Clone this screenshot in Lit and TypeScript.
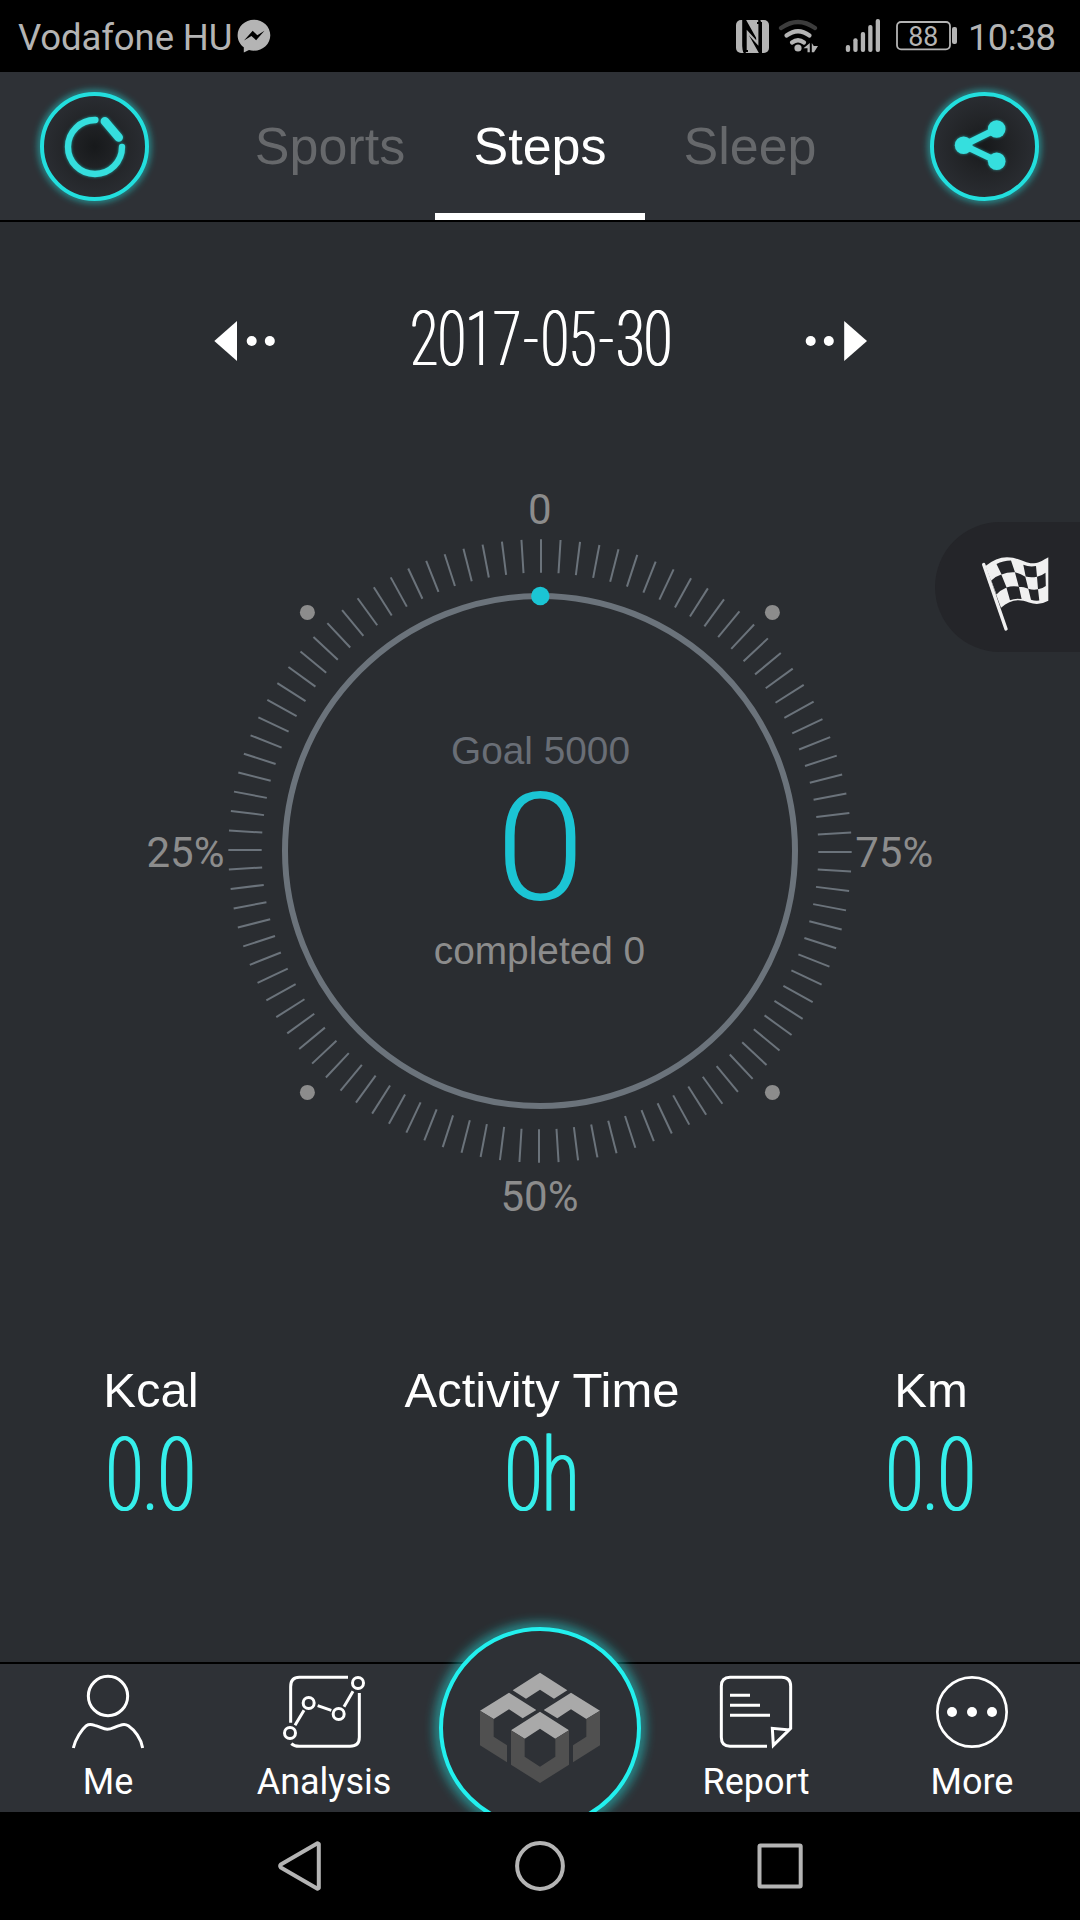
import { LitElement, html, svg, css } from "lit";
import { customElement } from "lit/decorators.js";

const tabs = [
  { label: "Sports", active: false },
  { label: "Steps", active: true },
  { label: "Sleep", active: false },
];

const stats = [
  { label: "Kcal", value: "0.0" },
  { label: "Activity Time", value: "0h" },
  { label: "Km", value: "0.0" },
];

@customElement("status-bar")
class StatusBar extends LitElement {
  static styles = css`
    :host {
      display: flex;
      align-items: center;
      justify-content: space-between;
      height: 72px;
      padding: 4px 26px 0 18px;
      box-sizing: border-box;
      background: #000;
      color: #b4b4b4;
      font-family: Roboto, "Liberation Sans", sans-serif;
      font-size: 36.5px;
      line-height: 72px;
    }
    .side { display: flex; align-items: center; height: 72px; }
    .carrier { letter-spacing: -0.1px; width: 219px; white-space: nowrap; }
    svg { display: block; }
    .sys { margin-top: -4px; }
    .clock { width: 86px; white-space: nowrap; letter-spacing: -0.7px; }
    .pct { font: 400 27px Roboto, sans-serif; fill: #b4b4b4; }
  `;
  render() {
    return html`
      <div class="side">
        <span class="carrier">Vodafone HU</span>
        <svg class="sys" width="34" height="34" viewBox="237 20 34 34">
          <path fill="#b4b4b4" d="M254 20.700c9.100 0 16.300 7 16.300 15.500S263 51.700 254 51.700c-1.800 0-3.500-.2-5-.7l-5.200 2.500v-5.200c-3.800-2.800-6.200-7.200-6.200-12.100C237.600 27.700 244.900 20.700 254 20.700z"/>
          <path fill="#000" d="M244 41.500l8.700-9.700 4.600 4.500 7.200-4.500-8.400 9.400-4.700-4.300z"/>
        </svg>
      </div>
      <div class="side">
        <svg class="sys" width="234" height="40" viewBox="734 16 234 40">
          <rect x="736" y="20" width="33" height="33" rx="5" fill="#b4b4b4"/>
          <g fill="none">
            <path d="M745 53Q743.500 50 743.500 46V21.500L760.500 50V27Q760.500 23 759 20" stroke="#000" stroke-width="2.600"/>
            <path d="M745.500 52V24L759.500 49V22" stroke="#000" stroke-width="5"/>
            <path d="M747.800 50V32.500L757.300 43V24" stroke="#b4b4b4" stroke-width="2.200"/>
          </g>
          <g fill="none" stroke-width="4.200" stroke-linecap="round">
            <path d="M781 28q17-12 34 0" stroke="#3c3c3c"/>
            <path d="M786.500 35.500q11.500-8.500 23 0" stroke="#b4b4b4"/>
            <path d="M792 42.500q6-4.500 12 0" stroke="#b4b4b4"/>
          </g>
          <circle cx="798" cy="48" r="3.600" fill="#b4b4b4"/>
          <path fill="#b4b4b4" d="M809.800 43v9.200h-2.300v-4h-4zM811.800 43l2 3h4.200l-4 6.300h-2.200z"/>
          <g fill="#b4b4b4">
            <rect x="845.800" y="45" width="4.300" height="7" rx="2"/>
            <rect x="853.300" y="38.300" width="4.300" height="13.700" rx="2"/>
            <rect x="860.800" y="32" width="4.300" height="20" rx="2"/>
            <rect x="868.200" y="25" width="4.300" height="27" rx="2"/>
            <rect x="875.700" y="19" width="4.300" height="33" rx="2"/>
            <rect x="952" y="27" width="5" height="17" rx="2"/>
          </g>
          <rect x="897" y="22" width="53" height="27.300" rx="4" fill="none" stroke="#b4b4b4" stroke-width="1.800"/>
          <text class="pct" x="923.200" y="45.500" text-anchor="middle" textLength="30" lengthAdjust="spacingAndGlyphs">88</text>
        </svg>
        <span class="clock">10:38</span>
      </div>
    `;
  }
}

@customElement("app-header")
class AppHeader extends LitElement {
  static styles = css`
    :host {
      display: flex;
      align-items: stretch;
      height: 150px;
      box-sizing: border-box;
      padding: 0 14px;
      border-bottom: 2px solid #000;
      background: #2e3136;
      font-family: "Liberation Sans", Arial, sans-serif;
    }
    svg { display: block; align-self: center; flex: none; }
    .tabs { display: flex; flex: none; margin: 0 49px 0 50px; }
    .tab {
      width: 210px;
      box-sizing: border-box;
      border-bottom: 7px solid transparent;
      text-align: center;
      font-size: 52px;
      line-height: 148px;
      height: 148px;
      color: #66686b;
      white-space: nowrap;
    }
    .on { color: #fff; border-bottom-color: #fff; }
  `;
  ring() {
    return svg`
      <defs>
        <radialGradient id="g"><stop offset="0" stop-color="#17191b"/><stop offset=".5" stop-color="#222427"/><stop offset="1" stop-color="#2a2d32"/></radialGradient>
        <filter id="b" x="-30%" y="-30%" width="160%" height="160%"><feGaussianBlur stdDeviation="3.500"/></filter>
        <filter id="s" x="-30%" y="-30%" width="160%" height="160%"><feGaussianBlur stdDeviation="1.500"/></filter>
      </defs>
      <circle cx="80.500" cy="80.500" r="53" fill="none" stroke="#22dfde" stroke-width="6" opacity=".65" filter="url(#b)"/>
      <circle cx="80.500" cy="80.500" r="52.500" fill="url(#g)" stroke="#22dfde" stroke-width="4"/>`;
  }
  render() {
    const sync = svg`<path d="M81.400 54A27 27 0 1 0 108 80.800" stroke-width="6.300"/><path d="M90.900 55.300L104.700 71.500" stroke-width="8.600"/>`;
    const share = svg`<path d="M92.600 63L59.600 79.300 92.600 95" stroke-width="6.500"/><g stroke="none" fill="#35dfde"><circle cx="59.600" cy="79.200" r="8.800"/><circle cx="92.700" cy="63" r="8.800"/><circle cx="92.700" cy="95.200" r="8.800"/></g>`;
    return html`
      <svg width="161" height="161" viewBox="0 0 161 161">
        ${this.ring()}
        <g fill="none" stroke="#22dfde" stroke-linecap="round" opacity=".6" filter="url(#s)">${sync}</g>
        <g fill="none" stroke="#35dfde" stroke-linecap="round">${sync}</g>
      </svg>
      <div class="tabs">
        ${tabs.map((t) => html`<div class="tab ${t.active ? "on" : ""}">${t.label}</div>`)}
      </div>
      <svg width="161" height="161" viewBox="0 0 161 161">
        ${this.ring()}
        <g fill="none" stroke="#22dfde" stroke-linecap="round" opacity=".6" filter="url(#s)">${share}</g>
        <g fill="none" stroke="#35dfde" stroke-linecap="round">${share}</g>
      </svg>
    `;
  }
}

@customElement("date-switcher")
class DateSwitcher extends LitElement {
  static styles = css`
    :host {
      display: flex;
      justify-content: space-between;
      align-items: center;
      padding: 0 211px 0 212px;
      height: 100px;
    }
    svg { display: block; overflow: visible; }
    .date {
      display: flex;
      justify-content: center;
      width: 270px;
      margin-top: -4px;
      font: 200 76px/90px Roboto, "Liberation Sans", sans-serif;
      color: #fff;
      white-space: nowrap;
      text-shadow: 1.2px 0 #fff, -1.2px 0 #fff;
      transform: scaleX(0.662);
    }
    .dash { margin: 0 4px; }
  `;
  render() {
    const [year, month, day] = ["2017", "05", "30"];
    return html`
      <svg width="60" height="44" viewBox="212 319 60 44" fill="#fff">
        <path d="M214.300 341L237 321v40z"/><circle cx="251.700" cy="341" r="5"/><circle cx="269.800" cy="341" r="5"/>
      </svg>
      <div class="date"><span>${year}</span><span class="dash">-</span><span>${month}</span><span class="dash">-</span><span>${day}</span></div>
      <svg width="60" height="44" viewBox="809 319 60 44" fill="#fff">
        <path d="M867 341L844.200 321v40z"/><circle cx="810.700" cy="341" r="5"/><circle cx="828.800" cy="341" r="5"/>
      </svg>
    `;
  }
}

@customElement("step-gauge")
class StepGauge extends LitElement {
  static styles = css`
    :host { display: block; width: 1080px; height: 760px; }
    svg { display: block; }
    .scale { font: 400 42px Roboto, sans-serif; fill: #8c8c8c; }
    .note { font: 400 38.8px "Liberation Sans", Arial, sans-serif; text-anchor: middle; }
    .goal { fill: #696e76; }
    .done { fill: #8c8c8c; }
    .count { font: 300 150px Roboto, sans-serif; fill: #1bc5d4; text-anchor: middle; }
  `;
  render() {
    const ticks = Array.from({ length: 100 }, (_, i) => i * 3.6);
    return html`
      <svg width="1080" height="760" viewBox="0 472 1080 760">
        <g stroke="#6b737b" stroke-width="2">
          ${ticks.map((a) => svg`<line x1="541" x2="541" y1="539.300" y2="572.700" transform="rotate(${a} 540 851)"/>`)}
        </g>
        <circle cx="540" cy="851" r="255" fill="none" stroke="#6b737b" stroke-width="6"/>
        <circle cx="540.300" cy="596" r="9.200" fill="#1bc5d4"/>
        <g fill="#8c8c8c">
          <circle cx="307.400" cy="612.400" r="7.500"/><circle cx="772.400" cy="612.400" r="7.500"/>
          <circle cx="307.400" cy="1092.400" r="7.500"/><circle cx="772.400" cy="1092.400" r="7.500"/>
        </g>
        <text class="scale" x="539.800" y="524" text-anchor="middle">0</text>
        <text class="scale" x="146.500" y="867" textLength="78">25%</text>
        <text class="scale" x="855.200" y="867" textLength="78">75%</text>
        <text class="scale" x="500.500" y="1210.500" textLength="78">50%</text>
        <text class="note goal" x="540.500" y="764">Goal 5000</text>
        <text class="count" transform="translate(540.200 899.500) scale(1.070 1)">0</text>
        <text class="note done" x="539.500" y="964">completed 0</text>
      </svg>
    `;
  }
}

@customElement("flag-button")
class FlagButton extends LitElement {
  static styles = css`
    :host {
      display: block;
      width: 145px;
      height: 130px;
      border-radius: 65px 0 0 65px;
      background: #242529;
    }
    svg { display: block; margin-left: 45px; padding-top: 33px; }
  `;
  render() {
    return html`
      <svg width="70" height="78" viewBox="-2 -2 70 78">
        <path d="M1.700 7.500L24 72" stroke="#f0f0f0" stroke-width="3.400" stroke-linecap="round"/>
        <path fill="#f0f0f0" d="M3.500 9Q14 .5 25 .3C38 .5 43 7 52 6.300 58 6 62 2.500 66.300.3V43.700Q57 49 47 45.500C36 41 28 43 19 50.700z"/>
        <g fill="#242529">
          <path d="M14.500 7Q21 3.500 29 3.500L33 15.300Q26 14.800 19.600 17.500zM41.300 7.700Q47.500 10.300 54 9L55 19.700Q49 21 43.700 19.500zM9.300 23.500Q14 19 19.300 17.500L24.600 30.500Q18.500 33 14.500 37.500zM32.900 15.300Q38.500 16.500 43.300 19.700L46.300 31.700Q42 29.800 36.800 29.700zM55 19.700Q60 18.700 63.500 15.800L63.800 29Q60 32 56 32.300zM24.400 30.500Q30 28.500 36.900 29.700L39.600 42Q33 41 28 43.200zM46.300 31.700Q51 33.300 56 32.300L57.300 43.500Q53 44 49 42.800z"/>
        </g>
      </svg>
    `;
  }
}

@customElement("stat-row")
class StatRow extends LitElement {
  static styles = css`
    :host {
      display: grid;
      grid-template-columns: 390px 1fr 386px;
      margin: 0 -44px;
    }
    .stat { display: flex; flex-direction: column; align-items: center; color: #fff; }
    .label { font: 400 49px/60px "Liberation Sans", Arial, sans-serif; white-space: nowrap; }
    .value {
      font: 200 102px/100px Roboto, "Liberation Sans", sans-serif;
      color: #36efeb;
      text-shadow: 1.600px 0 #36efeb, -1.600px 0 #36efeb;
      transform: scaleX(0.66);
      margin-top: 5px;
    }
  `;
  render() {
    return html`${stats.map(
      (s) => html`<div class="stat"><div class="label">${s.label}</div><div class="value">${s.value}</div></div>`
    )}`;
  }
}

@customElement("bottom-nav")
class BottomNav extends LitElement {
  static styles = css`
    :host {
      display: grid;
      grid-template-columns: repeat(5, 216px);
      height: 150px;
      box-sizing: border-box;
      border-top: 2px solid #000;
      background: #2e3136;
      color: #fff;
      font: 400 36px/44px Roboto, "Liberation Sans", sans-serif;
    }
    .item { display: flex; flex-direction: column; align-items: center; padding-top: 6px; }
    .label { margin-top: 6px; white-space: nowrap; }
    svg { display: block; fill: none; stroke: #fff; stroke-width: 9; }
    .hub { position: relative; }
    .hub svg { position: absolute; left: -12px; top: -64px; stroke: none; }
  `;
  render() {
    return html`
      <div class="item">
        <svg width="84" height="84" viewBox="198 180 252 252">
          <circle cx="324" cy="258" r="59"/>
          <path d="M220 414C227 384 246 358 259 347Q268 341 284 346C300 350 310 358 322 358S345 350 360 346Q374 340 385 347C403 359 424 386 428 414"/>
        </svg>
        <div class="label">Me</div>
      </div>
      <div class="item">
        <svg width="84" height="84" viewBox="846 180 252 252">
          <path d="M1044 202H898Q872 202 872 230V338M874 401Q882 409 898 409H1050Q1078 409 1078 382V249"/>
          <g stroke-width="9"><circle cx="870" cy="369" r="16.500"/><circle cx="926" cy="279" r="16.500"/><circle cx="1016" cy="312" r="16.500"/><circle cx="1074" cy="219" r="16.500"/>
          <path d="M885 346L912 301M953 287L994 301M1032 290L1059 244"/></g>
        </svg>
        <div class="label">Analysis</div>
      </div>
      <div class="hub">
        <svg width="240" height="212" viewBox="0 -30 720 636">
          <defs><filter id="h" x="-30%" y="-30%" width="160%" height="160%"><feGaussianBlur stdDeviation="17"/></filter></defs>
          <circle cx="360" cy="354" r="300" fill="none" stroke="#22e6e4" stroke-width="24" opacity=".75" filter="url(#h)"/>
          <circle cx="360" cy="354" r="297" fill="#2e3136" stroke="#22f0ee" stroke-width="12"/>
          <g fill="#a9a9a9">
            <path d="M360 188L442 241 402 266 360 239 318 266 278 241z"/>
            <path d="M267 248L349 300 308 325 267 298 221 327 180 302z"/>
            <path d="M453 248L371 300 412 325 453 298 499 327 540 302z"/>
            <path d="M360 305L447 361 406 386 360 356 314 386 273 361z"/>
          </g>
          <g fill="#505050">
            <path d="M180 302L221 327V380L261 406V457L180 406z"/>
            <path d="M540 302L499 327V380L459 406V457L540 406z"/>
            <path d="M273 361L314 386V440L360 470 406 440V386L447 361V464L360 519 273 464z"/>
          </g>
        </svg>
      </div>
      <div class="item">
        <svg width="84" height="84" viewBox="162 180 252 252">
          <path d="M321 409H210Q184 409 184 382V229Q184 202 210 202H365Q392 202 392 229V355L340 406 337 355 390 360M210 256H270M210 286H300M210 316H330"/>
        </svg>
        <div class="label">Report</div>
      </div>
      <div class="item">
        <svg width="84" height="84" viewBox="810 180 252 252">
          <circle cx="936" cy="306" r="104" stroke-width="8"/>
          <g fill="#fff" stroke="none"><circle cx="876" cy="306" r="15"/><circle cx="936" cy="306" r="15"/><circle cx="996" cy="306" r="15"/></g>
        </svg>
        <div class="label">More</div>
      </div>
    `;
  }
}

@customElement("system-keys")
class SystemKeys extends LitElement {
  static styles = css`
    :host {
      display: flex;
      justify-content: center;
      align-items: center;
      gap: 180px;
      height: 108px;
      background: #000;
    }
    svg { display: block; fill: none; stroke: #b4b4b4; stroke-width: 4; stroke-linejoin: round; }
  `;
  render() {
    return html`
      <svg width="60" height="60" viewBox="0 0 60 60"><path d="M47.500 7.300L48.800 8V52L47.500 52.700 10.800 31.500Q9.600 30 10.800 28.500z"/></svg>
      <svg width="60" height="60" viewBox="0 0 60 60"><circle cx="30" cy="30" r="22.900"/></svg>
      <svg width="60" height="60" viewBox="0 0 60 60"><rect x="9.500" y="9.500" width="41.200" height="41" rx="1"/></svg>
    `;
  }
}

@customElement("app-root")
class AppRoot extends LitElement {
  static styles = css`
    :host { display: block; width: 1080px; height: 1920px; overflow: hidden; background: #2a2d31; }
    .page { display: flex; flex-direction: column; height: 1920px; }
    .body { position: relative; flex: 1; display: flex; flex-direction: column; overflow: hidden; }
    date-switcher { margin-top: 69px; }
    step-gauge { margin-top: 81px; }
    .pin { position: absolute; right: 0; top: 300px; }
    stat-row { margin-top: 128px; }
    bottom-nav { position: relative; }
  `;
  render() {
    return html`
      <div class="page">
        <status-bar></status-bar>
        <app-header></app-header>
        <div class="body">
          <date-switcher></date-switcher>
          <step-gauge></step-gauge>
          <stat-row></stat-row>
          <flag-button class="pin"></flag-button>
        </div>
        <bottom-nav></bottom-nav>
        <system-keys></system-keys>
      </div>
    `;
  }
}
